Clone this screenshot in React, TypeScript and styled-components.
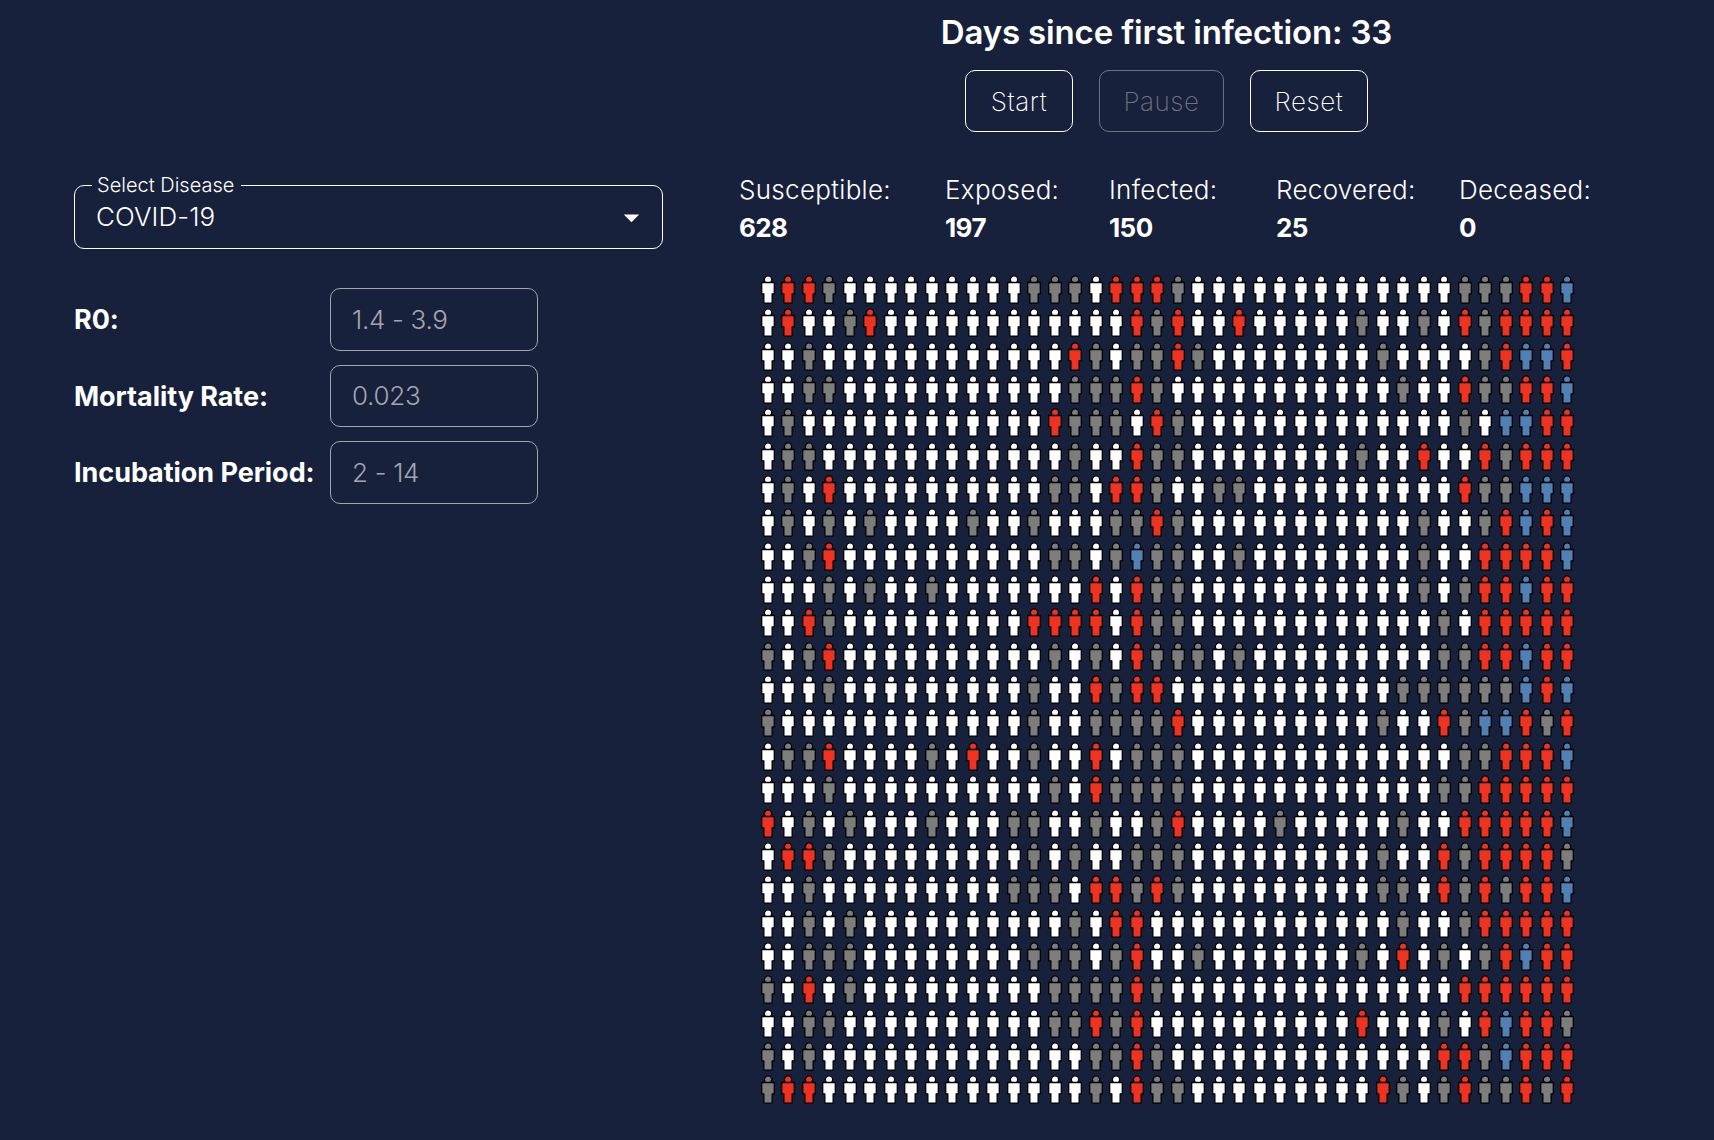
import React from "react";
import styled, { createGlobalStyle } from "styled-components";

const GlobalStyle = createGlobalStyle`
  html, body { margin: 0; padding: 0; background: #17213b; }
  body { font-family: Inter, "Noto Sans", "Liberation Sans", sans-serif; color: #fff; }
`;

const Page = styled.div`
  display: flex;
  align-items: flex-start;
  min-height: 1140px;
  box-sizing: border-box;
  padding-left: 74px;
`;

const LeftPanel = styled.section`
  width: 589px;
  margin-top: 173px;
  flex: none;
`;

const SelectBox = styled.fieldset`
  box-sizing: border-box;
  height: 76px;
  margin: 0;
  padding: 0 12px 0 21px;
  border: 1px solid #fff;
  border-radius: 10px;
  display: flex;
  align-items: center;
  justify-content: space-between;
  min-width: 0;
`;

const SelectLegend = styled.legend`
  margin-left: -4px;
  padding: 0 7px 0 5px;
  font-size: 20px;
  line-height: 24px;
  font-weight: 300;
`;

const SelectValue = styled.span`
  font-size: 26px;
  font-weight: 300;
  line-height: 38px;
  margin-top: -11px;
  letter-spacing: 0.1px;
`;

const Caret = styled.svg`
  width: 37px;
  height: 37px;
  fill: #fff;
  margin-top: -10px;
`;

const ParamGrid = styled.div`
  display: grid;
  grid-template-columns: 256px 208px;
  grid-auto-rows: 62.5px;
  row-gap: 14px;
  align-items: center;
  margin-top: 39px;
`;

const ParamLabel = styled.label`
  font-size: 27px;
  line-height: 36px;
  font-weight: 700;
  letter-spacing: -0.05px;
  padding-top: 2px;
`;

const ParamInput = styled.input`
  box-sizing: border-box;
  width: 100%;
  height: 62.5px;
  padding: 0 21px;
  background: transparent;
  border: 1px solid #a3a6b0;
  border-radius: 10px;
  outline: none;
  font-family: inherit;
  font-size: 26px;
  font-weight: 300;
  letter-spacing: -0.3px;
  color: #a3a6b0;
  &::placeholder { color: #a3a6b0; opacity: 1; }
`;

const RightPanel = styled.main`
  width: 860px;
  margin-left: 76px;
  padding-top: 8px;
  flex: none;
`;

const TopSection = styled.div`
  width: 855px;
  display: flex;
  flex-direction: column;
  align-items: center;
`;

const Title = styled.h1`
  margin: 0;
  font-size: 33px;
  line-height: 48px;
  font-weight: 600;
  letter-spacing: -0.15px;
`;

const ButtonRow = styled.div`
  display: flex;
  gap: 26px;
  margin-top: 14px;
`;

const ActionButton = styled.button<{ $width: number }>`
  box-sizing: border-box;
  width: ${(p) => p.$width}px;
  height: 62px;
  padding: 0;
  background: transparent;
  border: 1px solid #fff;
  border-radius: 10px;
  color: #fff;
  font-family: inherit;
  font-size: 26px;
  font-weight: 200;
  letter-spacing: 0.55px;
  &:disabled {
    border-color: #6d7280;
    color: #6d7280;
  }
`;

const Stats = styled.div`
  display: grid;
  grid-template-columns: 206px 164px 167px 183px auto;
  margin-top: 39px;
`;

const StatLabel = styled.div`
  font-size: 26px;
  line-height: 38px;
  font-weight: 300;
  letter-spacing: 0.3px;
`;

const StatValue = styled.div`
  font-size: 26px;
  line-height: 38px;
  font-weight: 700;
  letter-spacing: -0.6px;
`;

const PeopleGrid = styled.div`
  display: grid;
  grid-template-columns: repeat(40, 20.5px);
  grid-auto-rows: 33.35px;
  margin: 28px 0 0 18.5px;
`;

const statusFill: Record<string, string> = {
  W: "#ffffff",
  G: "#7d7d7d",
  R: "#ee3322",
  B: "#5080b4",
};

const PersonIcon = styled.svg<{ $status: string }>`
  display: block;
  justify-self: center;
  width: 14px;
  height: 29px;
  fill: ${(p) => statusFill[p.$status]};
  stroke: #000;
  stroke-width: 1.3px;
  stroke-linejoin: round;
  overflow: visible;
`;

const rows = [
  "WRRGWWWWWWWWWGGGWRRR" + "GWWWWWWWWWWWWWGGGRRB",
  "WRWWGRWWWWWWWWWWWWRG" + "RWWRWWWWWGWWGWRGRRRR",
  "WWGWWWWWWWWWWWWRGWGG" + "RGWWWWWWWWGWWWWGRBBR",
  "WWGGWWWWWWWWWWWGGGRG" + "WWWWWWWWWWWGWWRGGRRB",
  "WGWWWWWWWWWWWWRGGGWR" + "GWWWWWWWWWWWWWGWBBRR",
  "WGGWWWWWWWWWWWWGWWRG" + "GWWWWWWWWGWWRWWRGRRR",
  "WGWRWWWWWWWWWWGGWRRG" + "WWGGWWWWWWWWWWRGGBBB",
  "WGWGWGWWWWGWWGWWWGGR" + "GWWWWWWWWWWWGWWGRBRB",
  "WWGRWWWWWWWWWWGGWGBG" + "GWWGWWWWWWWWGWWRRRRB",
  "WWWGWGWWGWWWWWWWRWRG" + "GWWWWWWWWWWWGWGRRBRR",
  "WWRGWWWWWWWWWRRRRWRG" + "GWWWWWWWWWWWWGWRRRRR",
  "GWGRWWWWWWWWWWGWGWRG" + "GGWGWWWWWWWWWGGRRBRR",
  "WWWGWWWWWWWWWGWWRGRR" + "WWWWWWWWWWWGGGGGGBRB",
  "GWWWWWWWWWWWWGWWGGGG" + "RWWWWWWWWWGWWRGBBRGR",
  "WGGRWWWWGWRWWGWWRWGG" + "GWWWWWWWWWWWWWGGRRRB",
  "WWWGWWWWWWWWWWGWRGGG" + "GWWWWWWWWWWWWGGRRRRR",
  "RWGWGWWWGWWWGGWWGWWG" + "RWWWWGWWWWWGWWRRRRRB",
  "WRRGWWWWWWWWWGWGWWGG" + "GWWWWWWWWWGWWRGRRRRG",
  "WWGWWWWWWWWWGGGWRRGR" + "GWWWWWWWWWGGWRGRGRRB",
  "WWGWGWWWWWWWWWWGWRRW" + "WWWWWWWWWWWGWWGRRRRR",
  "WWGGGWWWWWWWWGGGWGRW" + "WGWWWWWWWGWRWGWGRBRR",
  "GWRWGWWWWWWWWWGGGGRG" + "WWWWWWWWWWWWWWRRRRRR",
  "WWGGWWWWWWWWWWGGRGRW" + "WWWWWWWWWRWWWGWRBRRG",
  "GWGWWWWWWWWWWWWWGGRG" + "WWWWWWWWWWWWWRRGBRRR",
  "GRRWWWWWWWWWWWWWGWRG" + "GWWWWWWWWWRGWGRGGRGR",
];

const Person = ({ status }: { status: string }) => (
  <PersonIcon $status={status} viewBox="0 0 14 29">
    <circle cx="7" cy="4.5" r="3.65" />
    <path d="M.7 8q0-.5.5-.5h11.6q.5 0 .5.5v10.85h-2.15v8.75q0 .5-.5.5H3.35q-.5 0-.5-.5v-8.75H.7z" />
  </PersonIcon>
);

const stats = [
  ["Susceptible:", "628"],
  ["Exposed:", "197"],
  ["Infected:", "150"],
  ["Recovered:", "25"],
  ["Deceased:", "0"],
];

export default function App() {
  return (
    <>
      <GlobalStyle />
      <Page>
        <LeftPanel>
          <SelectBox>
            <SelectLegend>Select Disease</SelectLegend>
            <SelectValue>COVID-19</SelectValue>
            <Caret viewBox="0 0 24 24">
              <path d="M7 10l5 5 5-5z" />
            </Caret>
          </SelectBox>
          <ParamGrid>
            <ParamLabel>R0:</ParamLabel>
            <ParamInput readOnly placeholder="1.4 - 3.9" />
            <ParamLabel>Mortality Rate:</ParamLabel>
            <ParamInput readOnly placeholder="0.023" />
            <ParamLabel>Incubation Period:</ParamLabel>
            <ParamInput readOnly placeholder="2 - 14" />
          </ParamGrid>
        </LeftPanel>
        <RightPanel>
          <TopSection>
            <Title>Days since first infection: 33</Title>
            <ButtonRow>
              <ActionButton $width={108}>Start</ActionButton>
              <ActionButton $width={125} disabled>Pause</ActionButton>
              <ActionButton $width={118}>Reset</ActionButton>
            </ButtonRow>
          </TopSection>
          <Stats>
            {stats.map(([label, value]) => (
              <div key={label}>
                <StatLabel>{label}</StatLabel>
                <StatValue>{value}</StatValue>
              </div>
            ))}
          </Stats>
          <PeopleGrid>
            {rows.flatMap((row, r) =>
              row.split("").map((s, c) => <Person key={`${r}-${c}`} status={s} />)
            )}
          </PeopleGrid>
        </RightPanel>
      </Page>
    </>
  );
}
